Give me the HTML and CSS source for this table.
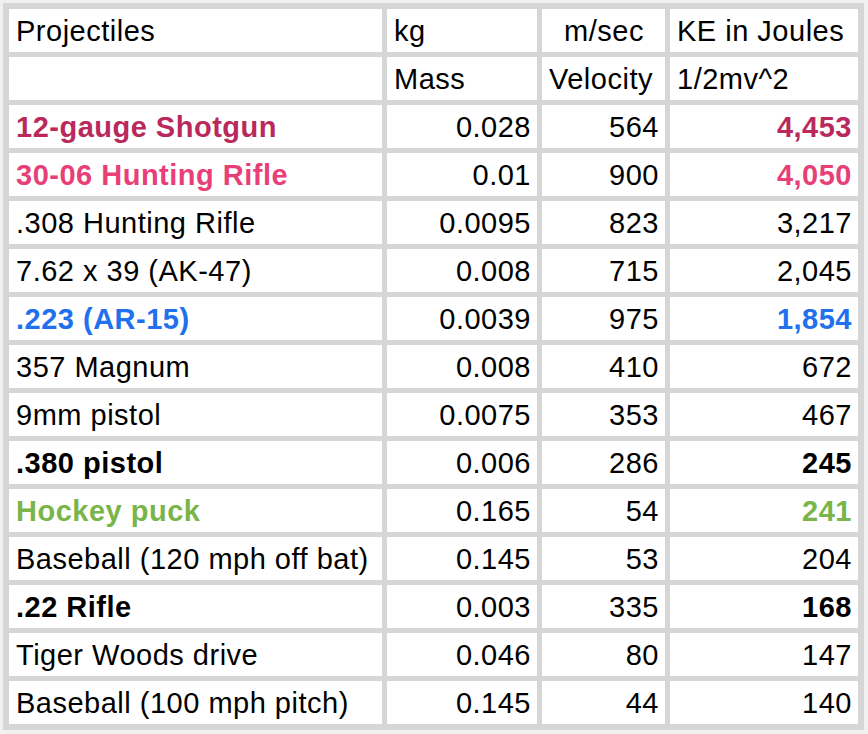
FILE: index.html
```html
<!DOCTYPE html>
<html>
<head>
<meta charset="utf-8">
<link rel="stylesheet" href="styles.css">
</head>
<body>
<div class="sheet">
  <div class="c">Projectiles</div><div class="c">kg</div><div class="c ctr">m/sec</div><div class="c">KE in Joules</div>
  <div class="c"></div><div class="c">Mass</div><div class="c">Velocity</div><div class="c">1/2mv^2</div>

  <div class="c b crimson">12-gauge Shotgun</div><div class="c r">0.028</div><div class="c r">564</div><div class="c r b crimson">4,453</div>
  <div class="c b pink">30-06 Hunting Rifle</div><div class="c r">0.01</div><div class="c r">900</div><div class="c r b pink">4,050</div>
  <div class="c">.308 Hunting Rifle</div><div class="c r">0.0095</div><div class="c r">823</div><div class="c r">3,217</div>
  <div class="c">7.62 x 39 (AK-47)</div><div class="c r">0.008</div><div class="c r">715</div><div class="c r">2,045</div>
  <div class="c b blue">.223 (AR-15)</div><div class="c r">0.0039</div><div class="c r">975</div><div class="c r b blue">1,854</div>
  <div class="c">357 Magnum</div><div class="c r">0.008</div><div class="c r">410</div><div class="c r">672</div>
  <div class="c">9mm pistol</div><div class="c r">0.0075</div><div class="c r">353</div><div class="c r">467</div>
  <div class="c b">.380 pistol</div><div class="c r">0.006</div><div class="c r">286</div><div class="c r b">245</div>
  <div class="c b green">Hockey puck</div><div class="c r">0.165</div><div class="c r">54</div><div class="c r b green">241</div>
  <div class="c">Baseball (120 mph off bat)</div><div class="c r">0.145</div><div class="c r">53</div><div class="c r">204</div>
  <div class="c b">.22 Rifle</div><div class="c r">0.003</div><div class="c r">335</div><div class="c r b">168</div>
  <div class="c">Tiger Woods drive</div><div class="c r">0.046</div><div class="c r">80</div><div class="c r">147</div>
  <div class="c">Baseball (100 mph pitch)</div><div class="c r">0.145</div><div class="c r">44</div><div class="c r">140</div>
</div>
</body>
</html>
```
FILE: styles.css
```css
html, body {
  margin: 0;
  padding: 0;
  background: #f1f1f1;
}
body {
  padding: 3px 0 0 3px;
  font-family: "Liberation Sans", Arial, sans-serif;
}
.sheet {
  display: grid;
  grid-template-columns: 373px 150px 123px 188px;
  grid-auto-rows: 43px;
  gap: 5px;
  padding: 6px;
  width: max-content;
  background: #d6d6d6;
}
.c {
  background: #fff;
  font-size: 29px;
  letter-spacing: 0.5px;
  line-height: 41px;
  padding: 2px 6px 0 7px;
  white-space: nowrap;
  overflow: visible;
  color: #000;
  box-sizing: border-box;
  height: 43px;
}
.r { text-align: right; }
.ctr { text-align: center; }
.b { font-weight: bold; }
.crimson { color: #b9295b; }
.pink { color: #e83f78; }
.blue { color: #2170ee; }
.green { color: #79b548; }
```
